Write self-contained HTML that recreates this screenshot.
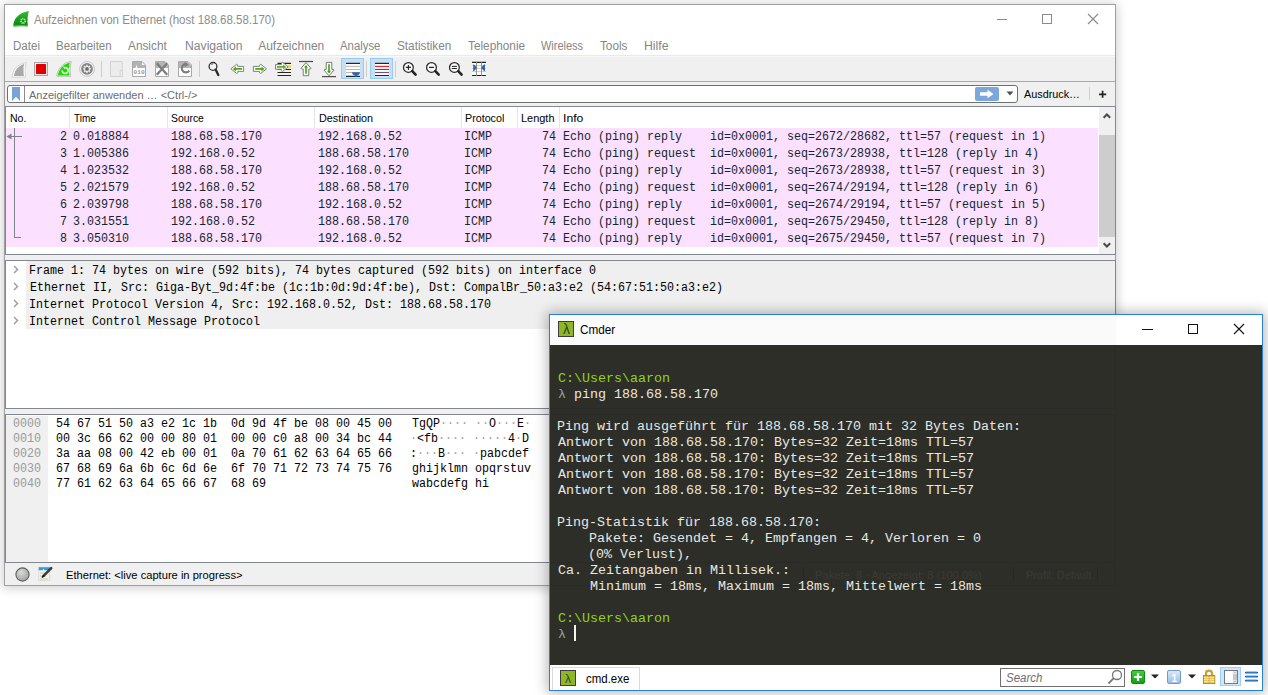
<!DOCTYPE html><html><head><meta charset="utf-8"><style>
html,body{margin:0;padding:0;}
body{width:1268px;height:695px;overflow:hidden;position:relative;background:#fff;}
.t{position:absolute;white-space:pre;line-height:1;transform-origin:0 0;}
.b{position:absolute;box-sizing:border-box;}
svg{position:absolute;overflow:visible;}
</style></head><body>
<div class="b" style="left:4px;top:4px;width:1112px;height:582px;box-shadow:0 1px 10px 1px rgba(0,0,0,0.20);background:#f0f0f0;border:1px solid #a0a0a0;"></div>
<div class="b" style="left:5px;top:5px;width:1110px;height:50px;background:#fff;"></div>
<svg style="left:12px;top:10px;" width="18" height="18" viewBox="0 0 18 18"><defs><linearGradient id="lg" x1="0" y1="0" x2="0" y2="1"><stop offset="0" stop-color="#30c030"/><stop offset="0.85" stop-color="#0f8a0f"/><stop offset="1" stop-color="#5cb85c"/></linearGradient></defs><path d="M1.2 16.7C1.3 9.5 5.5 3 16.9 1C15.6 5.5 15.1 10.5 15.9 16.6C11 16 6 16 1.2 16.7Z" fill="url(#lg)"/><circle cx="11" cy="11" r="2.1" fill="none" stroke="#e8f8e8" stroke-width="1.4" stroke-dasharray="1 0.65"/><path d="M2.5 16.2C6 15.6 11 15.6 15.5 16.2" stroke="#6fcf6f" stroke-width="0.8" fill="none"/></svg>
<div class="t" style="left:34.30px;top:14.00px;font-size:12px;color:#8c8c8c;font-family:'Liberation Sans', sans-serif;transform:scaleX(0.9582);">Aufzeichnen von Ethernet (host 188.68.58.170)</div>
<div class="b" style="left:997px;top:19px;width:10px;height:1px;background:#8a8a8a;"></div>
<div class="b" style="left:1042px;top:14px;width:10px;height:10px;border:1px solid #8a8a8a;"></div>
<svg style="left:1087px;top:13px;" width="12" height="12" viewBox="0 0 12 12"><path d="M1 1L11 11M11 1L1 11" stroke="#8a8a8a" stroke-width="1.1"/></svg>
<div class="t" style="left:13.40px;top:40.00px;font-size:12px;color:#858585;font-family:'Liberation Sans', sans-serif;transform:scaleX(0.9617);">Datei</div>
<div class="t" style="left:56.30px;top:40.00px;font-size:12px;color:#858585;font-family:'Liberation Sans', sans-serif;transform:scaleX(0.9587);">Bearbeiten</div>
<div class="t" style="left:128.20px;top:40.00px;font-size:12px;color:#858585;font-family:'Liberation Sans', sans-serif;transform:scaleX(0.9846);">Ansicht</div>
<div class="t" style="left:184.50px;top:40.00px;font-size:12px;color:#858585;font-family:'Liberation Sans', sans-serif;transform:scaleX(1.0138);">Navigation</div>
<div class="t" style="left:258.20px;top:40.00px;font-size:12px;color:#858585;font-family:'Liberation Sans', sans-serif;">Aufzeichnen</div>
<div class="t" style="left:340.20px;top:40.00px;font-size:12px;color:#858585;font-family:'Liberation Sans', sans-serif;transform:scaleX(0.9461);">Analyse</div>
<div class="t" style="left:397.00px;top:40.00px;font-size:12px;color:#858585;font-family:'Liberation Sans', sans-serif;transform:scaleX(0.9801);">Statistiken</div>
<div class="t" style="left:467.50px;top:40.00px;font-size:12px;color:#858585;font-family:'Liberation Sans', sans-serif;transform:scaleX(0.9833);">Telephonie</div>
<div class="t" style="left:541.30px;top:40.00px;font-size:12px;color:#858585;font-family:'Liberation Sans', sans-serif;transform:scaleX(0.9152);">Wireless</div>
<div class="t" style="left:600.20px;top:40.00px;font-size:12px;color:#858585;font-family:'Liberation Sans', sans-serif;transform:scaleX(0.9781);">Tools</div>
<div class="t" style="left:644.20px;top:40.00px;font-size:12px;color:#858585;font-family:'Liberation Sans', sans-serif;transform:scaleX(1.0233);">Hilfe</div>
<div class="b" style="left:5px;top:55px;width:1110px;height:26px;background:#f0f0f0;border-top:1px solid #e9e9e9;"></div>
<div class="b" style="left:5px;top:56px;width:1110px;height:1px;background:#f8f8f8;"></div>
<div class="b" style="left:5px;top:81px;width:1110px;height:1px;background:#a8a8a8;"></div>
<svg style="left:0;top:0" width="1268" height="695" viewBox="0 0 1268 695"><path d="M11.9 77.2C12.5 70.5 17 63.8 26.2 62.6C25 67 24.8 72 25.7 77.2Z" fill="#f8f8f8" stroke="#d2d2d2" stroke-width="0.9"/><path d="M13.9 76C14.8 70.5 18 66 24.2 64.1C23.3 68 23.2 72 24 76Z" fill="#a9a9a9"/><path d="M24 66.5C24.8 69 24.8 72 24 74" stroke="#f4f4f4" stroke-width="1" fill="none"/><rect x="34.5" y="62.5" width="13" height="13" fill="#fde8e8" stroke="#a8a8a8" stroke-width="1"/><rect x="36" y="64" width="10" height="10" fill="#dc0000" rx="0.5"/><path d="M56.8 76.3C57.5 69.5 62 62.8 71.3 61.5C70 66 69.8 71 70.7 76.3Z" fill="#f4f4f4" stroke="#b8b8b8" stroke-width="0.9"/><path d="M57.8 75.6C58.8 69.5 62.5 64.5 69.8 62.4C68.8 66.5 68.6 71 69.4 75.6Z" fill="#1edc00"/><path d="M62.2 70.5A2.9 2.9 0 1 0 65.4 67.6" stroke="#fff" stroke-width="1.5" fill="none"/><path d="M63.2 66.2L66 67.4L64.2 69.3Z" fill="#fff"/><circle cx="87" cy="68.9" r="7.4" fill="#f6f6f6" stroke="#c4c4c4" stroke-width="1"/><circle cx="87" cy="68.9" r="5.9" fill="#858585"/><path d="M86.28 66.09L86.31 64.86L87.69 64.86L87.72 66.09L88.11 66.22L88.48 66.41L89.37 65.55L90.35 66.53L89.49 67.42L89.68 67.79L89.81 68.18L91.04 68.21L91.04 69.59L89.81 69.62L89.68 70.01L89.49 70.38L90.35 71.27L89.37 72.25L88.48 71.39L88.11 71.58L87.72 71.71L87.69 72.94L86.31 72.94L86.28 71.71L85.89 71.58L85.52 71.39L84.63 72.25L83.65 71.27L84.51 70.38L84.32 70.01L84.19 69.62L82.96 69.59L82.96 68.21L84.19 68.18L84.32 67.79L84.51 67.42L83.65 66.53L84.63 65.55L85.52 66.41L85.89 66.22Z" fill="#f2f2f2"/><circle cx="87" cy="68.9" r="1.9" fill="#6a6a6a"/><path d="M101.5 61V77" stroke="#cdcdcd" stroke-width="1"/><path d="M199.5 61V77" stroke="#cdcdcd" stroke-width="1"/><path d="M366.5 61V77" stroke="#cdcdcd" stroke-width="1"/><path d="M395.5 61V77" stroke="#cdcdcd" stroke-width="1"/><path d="M110.5 61.5H122.2V76.5H110.5Z" fill="#ececec" stroke="#d2d2d2"/><path d="M120.2 70.5H122.5V76.5H120.2Z" fill="#f2f2f2" stroke="#d2d2d2"/><path d="M132.5 61.5H142L145.5 65V76.5H132.5Z" fill="#fff" stroke="#a9a9a9"/><path d="M133 62H141.8L145 65.2V68H137.5L136.5 64.5L135.5 68H133Z" fill="#b2b2b2"/><path d="M142 62.5V65H144.5" fill="#fff"/><text x="133.6" y="74.4" font-family="Liberation Mono" font-size="5.6" font-weight="bold" fill="#9a9a9a" style="-webkit-font-smoothing:antialiased" textLength="11" lengthAdjust="spacingAndGlyphs">010</text><path d="M155.5 61.5H165L168.5 65V76.5H155.5Z" fill="#fff" stroke="#a9a9a9"/><path d="M156 62H164.8L168 65.2V68H156Z" fill="#b4b4b4"/><path d="M156.8 63.2L167.2 74.8M167.2 63.2L156.8 74.8" stroke="#7e7e7e" stroke-width="2.4"/><path d="M178.5 61.5H188L191.5 65V76.5H178.5Z" fill="#fff" stroke="#a9a9a9"/><path d="M179 62H187.8L191 65.2V68H179Z" fill="#b4b4b4"/><path d="M189.3 70.6A4.1 4.1 0 1 1 186 64.2" stroke="#7e7e7e" stroke-width="2.2" fill="none"/><path d="M184.4 61.8L188.8 64.4L184.8 67.2Z" fill="#7e7e7e"/><circle cx="213" cy="66.4" r="3.9" fill="#f4f4f2" stroke="#333" stroke-width="1.3"/><path d="M215.6 69.6L218.3 75" stroke="#2a2a2a" stroke-width="2.3" stroke-linecap="round"/><path d="M211.2 64.7A2 2 0 0 1 213 64" stroke="#555" stroke-width="0.8" fill="none"/><path d="M230.8 68.8L236.6 64.3L237.8 65V66.4H243.6V71.4H237.8V72.8L236.6 73.4Z" fill="#fff" stroke="#808080" stroke-width="1" stroke-linejoin="round"/><path d="M232.8 68.9L236 66.4V68H242V69.8H236V71.4Z" fill="#4aac00"/><path d="M266.6 68.8L260.8 64.3L259.6 65V66.4H253.4V71.4H259.6V72.8L260.8 73.4Z" fill="#fff" stroke="#808080" stroke-width="1" stroke-linejoin="round"/><path d="M264.6 68.9L261.4 66.4V68H255.2V69.8H261.4V71.4Z" fill="#4aac00"/><path d="M277.5 63.4H291M277.5 69.5H291M277.5 72.5H291M277.5 75.5H291" stroke="#262626" stroke-width="1.1"/><rect x="287.8" y="65" width="3.4" height="3.3" fill="#ffe033"/><path d="M288.2 66.9L282.6 62.3L281.5 63V64.6H275.5V69.2H281.5V70.8L282.6 71.5Z" fill="#fff" stroke="#808080" stroke-width="1" stroke-linejoin="round"/><path d="M286.2 66.9L283 64.4V66H277V67.8H283V69.4Z" fill="#5ab41a"/><path d="M299 61.5H313" stroke="#4a4a4a" stroke-width="1.2"/><path d="M306 62.6L311 68.3L310.4 69H308.8V75.7H303.2V69H301.6L301 68.3Z" fill="#fff" stroke="#7a7a7a" stroke-width="1" stroke-linejoin="round"/><path d="M306 65L308 67.6H306.8V73.8H305.2V67.6H304Z" fill="#38a800"/><path d="M322 76.6H336" stroke="#4a4a4a" stroke-width="1.2"/><path d="M329 75.8L334 70.1L333.4 69.4H331.8V62.4H326.2V69.4H324.6L324 70.1Z" fill="#fff" stroke="#7a7a7a" stroke-width="1" stroke-linejoin="round"/><path d="M329 73.4L331 70.8H329.8V64.2H328.2V70.8H327Z" fill="#38a800"/><rect x="341.5" y="58.5" width="22" height="20" fill="#c5dff4" stroke="#98cbf3" stroke-width="1"/><rect x="346" y="62.8" width="14" height="14.2" fill="#fbfbf8"/><path d="M346 63.4H360M346 76.4H360" stroke="#262626" stroke-width="1.1"/><path d="M346 66.4H360M346 69.5H360M346 72.5H360" stroke="#b8b8ae" stroke-width="1"/><path d="M352 72.2H360C360 74 358.5 75 357.2 75.4L356.6 77H355.6L355 75.4C353.6 75 352 74 352 72.2Z" fill="#2f62aa"/><rect x="370.5" y="58.5" width="22" height="20" fill="#c5dff4" stroke="#98cbf3" stroke-width="1"/><rect x="375" y="62.8" width="14" height="13.4" fill="#fbfbf8"/><path d="M375 63.4H389M375 75.5H389" stroke="#262626" stroke-width="1.1"/><path d="M375 66.4H389" stroke="#f01a1a" stroke-width="1.1"/><path d="M375 69.5H389" stroke="#2a58a8" stroke-width="1.1"/><path d="M375 72.5H389" stroke="#74508a" stroke-width="1.1"/><circle cx="408.4" cy="67.4" r="4.9" fill="#f8f8f6" stroke="#2a2a2a" stroke-width="1.25"/><path d="M412.29999999999995 71.2L415.59999999999997 74.6" stroke="#222" stroke-width="2.6" stroke-linecap="round"/><path d="M405.9 67.4H410.9M408.4 64.9V69.9" stroke="#222" stroke-width="1.1"/><circle cx="431.5" cy="67.4" r="4.9" fill="#f8f8f6" stroke="#2a2a2a" stroke-width="1.25"/><path d="M435.4 71.2L438.7 74.6" stroke="#222" stroke-width="2.6" stroke-linecap="round"/><path d="M429.0 67.4H434.0" stroke="#222" stroke-width="1.2"/><circle cx="454.4" cy="67.4" r="4.9" fill="#f8f8f6" stroke="#2a2a2a" stroke-width="1.25"/><path d="M458.29999999999995 71.2L461.59999999999997 74.6" stroke="#222" stroke-width="2.6" stroke-linecap="round"/><path d="M451.9 66.4H456.9M451.9 68.5H456.9" stroke="#222" stroke-width="1"/><rect x="472" y="62.4" width="14" height="13" fill="#fbfbf8"/><path d="M472 65.5H486M472 68.5H486M472 71.5H486" stroke="#c8c8bc" stroke-width="0.9"/><path d="M472 62.4H486M472 75.5H486" stroke="#222" stroke-width="1.1"/><path d="M476.5 62V76M481.5 62V76" stroke="#8a8a80" stroke-width="0.9"/><path d="M473.2 64.2C474.6 64.2 476 66.5 476.8 67.8C476 69.1 474.6 71.2 473.2 71.2Z" fill="#2f62b0"/><path d="M485 64.2C483.6 64.2 482.2 66.5 481.4 67.8C482.2 69.1 483.6 71.2 485 71.2Z" fill="#2f62b0"/></svg>
<div class="b" style="left:7px;top:85px;width:1011px;height:18px;background:#fff;border:1px solid #707070;border-radius:3px;"></div>
<div class="b" style="left:12px;top:87px;width:8px;height:14px;background:#7ba2d6;clip-path:polygon(0 0,100% 0,100% 100%,50% 70%,0 100%);"></div>
<div class="b" style="left:24px;top:86px;width:1px;height:16px;background:#8a8a8a;"></div>
<div class="t" style="left:28.60px;top:90.00px;font-size:11.5px;color:#6d6d6d;font-family:'Liberation Sans', sans-serif;transform:scaleX(0.9581);">Anzeigefilter anwenden … &lt;Ctrl-/&gt;</div>
<div class="b" style="left:975px;top:87px;width:24px;height:14px;background:#7ba7da;border-radius:2px;"></div>
<svg style="left:979px;top:89px;" width="16" height="10" viewBox="0 0 16 10"><path d="M1 3.2H8.5V0.8L14.5 5L8.5 9.2V6.8H1Z" fill="#fff"/></svg>
<svg style="left:1006px;top:91px;" width="8" height="5" viewBox="0 0 8 5"><path d="M0.5 0.5H7.5L4 4.5Z" fill="#505050"/></svg>
<div class="t" style="left:1024.10px;top:89.00px;font-size:11.5px;color:#000;font-family:'Liberation Sans', sans-serif;transform:scaleX(0.9407);">Ausdruck…</div>
<div class="b" style="left:1089px;top:87px;width:1px;height:13px;background:#d0d0d0;"></div>
<svg style="left:1098px;top:90px;" width="10" height="9" viewBox="0 0 10 9"><path d="M4.6 0.8V7.8M1 4.3H8.2" stroke="#222" stroke-width="1.7"/></svg>
<div class="b" style="left:5px;top:106px;width:1111px;height:149px;background:#fff;border:1px solid #828790;"></div>
<div class="t" style="left:9.50px;top:113.00px;font-size:11.5px;color:#000;font-family:'Liberation Sans', sans-serif;transform:scaleX(0.9152);">No.</div>
<div class="t" style="left:73.70px;top:113.00px;font-size:11.5px;color:#000;font-family:'Liberation Sans', sans-serif;transform:scaleX(0.8653);">Time</div>
<div class="t" style="left:171.40px;top:113.00px;font-size:11.5px;color:#000;font-family:'Liberation Sans', sans-serif;transform:scaleX(0.9017);">Source</div>
<div class="t" style="left:318.50px;top:113.00px;font-size:11.5px;color:#000;font-family:'Liberation Sans', sans-serif;transform:scaleX(0.9398);">Destination</div>
<div class="t" style="left:465.10px;top:113.00px;font-size:11.5px;color:#000;font-family:'Liberation Sans', sans-serif;transform:scaleX(0.9320);">Protocol</div>
<div class="t" style="left:521.20px;top:113.00px;font-size:11.5px;color:#000;font-family:'Liberation Sans', sans-serif;transform:scaleX(0.9517);">Length</div>
<div class="t" style="left:562.74px;top:113.00px;font-size:11.5px;color:#000;font-family:'Liberation Sans', sans-serif;transform:scaleX(1.0626);">Info</div>
<div class="b" style="left:69px;top:107px;width:1px;height:21px;background:#e5e5e5;"></div>
<div class="b" style="left:167px;top:107px;width:1px;height:21px;background:#e5e5e5;"></div>
<div class="b" style="left:314px;top:107px;width:1px;height:21px;background:#e5e5e5;"></div>
<div class="b" style="left:461px;top:107px;width:1px;height:21px;background:#e5e5e5;"></div>
<div class="b" style="left:517px;top:107px;width:1px;height:21px;background:#e5e5e5;"></div>
<div class="b" style="left:559px;top:107px;width:1px;height:21px;background:#e5e5e5;"></div>
<div class="b" style="left:6px;top:128px;width:1092px;height:119px;background:#fce0ff;"></div>
<div class="t" style="left:59.50px;top:131.00px;font-size:12px;color:#12272e;font-family:'Liberation Mono', monospace;transform:scaleX(0.9721);">2</div>
<div class="t" style="left:73.00px;top:131.00px;font-size:12px;color:#12272e;font-family:'Liberation Mono', monospace;transform:scaleX(0.9721);">0.018884</div>
<div class="t" style="left:171.00px;top:131.00px;font-size:12px;color:#12272e;font-family:'Liberation Mono', monospace;transform:scaleX(0.9721);">188.68.58.170</div>
<div class="t" style="left:318.00px;top:131.00px;font-size:12px;color:#12272e;font-family:'Liberation Mono', monospace;transform:scaleX(0.9721);">192.168.0.52</div>
<div class="t" style="left:464.03px;top:131.00px;font-size:12px;color:#12272e;font-family:'Liberation Mono', monospace;transform:scaleX(0.9721);">ICMP</div>
<div class="t" style="left:542.00px;top:131.00px;font-size:12px;color:#12272e;font-family:'Liberation Mono', monospace;transform:scaleX(0.9721);">74</div>
<div class="t" style="left:563.00px;top:131.00px;font-size:12px;color:#12272e;font-family:'Liberation Mono', monospace;transform:scaleX(0.9721);">Echo (ping) reply    id=0x0001, seq=2672/28682, ttl=57 (request in 1)</div>
<div class="t" style="left:59.50px;top:148.00px;font-size:12px;color:#12272e;font-family:'Liberation Mono', monospace;transform:scaleX(0.9721);">3</div>
<div class="t" style="left:73.00px;top:148.00px;font-size:12px;color:#12272e;font-family:'Liberation Mono', monospace;transform:scaleX(0.9721);">1.005386</div>
<div class="t" style="left:171.00px;top:148.00px;font-size:12px;color:#12272e;font-family:'Liberation Mono', monospace;transform:scaleX(0.9721);">192.168.0.52</div>
<div class="t" style="left:318.00px;top:148.00px;font-size:12px;color:#12272e;font-family:'Liberation Mono', monospace;transform:scaleX(0.9721);">188.68.58.170</div>
<div class="t" style="left:464.03px;top:148.00px;font-size:12px;color:#12272e;font-family:'Liberation Mono', monospace;transform:scaleX(0.9721);">ICMP</div>
<div class="t" style="left:542.00px;top:148.00px;font-size:12px;color:#12272e;font-family:'Liberation Mono', monospace;transform:scaleX(0.9721);">74</div>
<div class="t" style="left:563.00px;top:148.00px;font-size:12px;color:#12272e;font-family:'Liberation Mono', monospace;transform:scaleX(0.9721);">Echo (ping) request  id=0x0001, seq=2673/28938, ttl=128 (reply in 4)</div>
<div class="t" style="left:59.50px;top:165.00px;font-size:12px;color:#12272e;font-family:'Liberation Mono', monospace;transform:scaleX(0.9721);">4</div>
<div class="t" style="left:73.00px;top:165.00px;font-size:12px;color:#12272e;font-family:'Liberation Mono', monospace;transform:scaleX(0.9721);">1.023532</div>
<div class="t" style="left:171.00px;top:165.00px;font-size:12px;color:#12272e;font-family:'Liberation Mono', monospace;transform:scaleX(0.9721);">188.68.58.170</div>
<div class="t" style="left:318.00px;top:165.00px;font-size:12px;color:#12272e;font-family:'Liberation Mono', monospace;transform:scaleX(0.9721);">192.168.0.52</div>
<div class="t" style="left:464.03px;top:165.00px;font-size:12px;color:#12272e;font-family:'Liberation Mono', monospace;transform:scaleX(0.9721);">ICMP</div>
<div class="t" style="left:542.00px;top:165.00px;font-size:12px;color:#12272e;font-family:'Liberation Mono', monospace;transform:scaleX(0.9721);">74</div>
<div class="t" style="left:563.00px;top:165.00px;font-size:12px;color:#12272e;font-family:'Liberation Mono', monospace;transform:scaleX(0.9721);">Echo (ping) reply    id=0x0001, seq=2673/28938, ttl=57 (request in 3)</div>
<div class="t" style="left:59.50px;top:182.00px;font-size:12px;color:#12272e;font-family:'Liberation Mono', monospace;transform:scaleX(0.9721);">5</div>
<div class="t" style="left:73.00px;top:182.00px;font-size:12px;color:#12272e;font-family:'Liberation Mono', monospace;transform:scaleX(0.9721);">2.021579</div>
<div class="t" style="left:171.00px;top:182.00px;font-size:12px;color:#12272e;font-family:'Liberation Mono', monospace;transform:scaleX(0.9721);">192.168.0.52</div>
<div class="t" style="left:318.00px;top:182.00px;font-size:12px;color:#12272e;font-family:'Liberation Mono', monospace;transform:scaleX(0.9721);">188.68.58.170</div>
<div class="t" style="left:464.03px;top:182.00px;font-size:12px;color:#12272e;font-family:'Liberation Mono', monospace;transform:scaleX(0.9721);">ICMP</div>
<div class="t" style="left:542.00px;top:182.00px;font-size:12px;color:#12272e;font-family:'Liberation Mono', monospace;transform:scaleX(0.9721);">74</div>
<div class="t" style="left:563.00px;top:182.00px;font-size:12px;color:#12272e;font-family:'Liberation Mono', monospace;transform:scaleX(0.9721);">Echo (ping) request  id=0x0001, seq=2674/29194, ttl=128 (reply in 6)</div>
<div class="t" style="left:59.50px;top:199.00px;font-size:12px;color:#12272e;font-family:'Liberation Mono', monospace;transform:scaleX(0.9721);">6</div>
<div class="t" style="left:73.00px;top:199.00px;font-size:12px;color:#12272e;font-family:'Liberation Mono', monospace;transform:scaleX(0.9721);">2.039798</div>
<div class="t" style="left:171.00px;top:199.00px;font-size:12px;color:#12272e;font-family:'Liberation Mono', monospace;transform:scaleX(0.9721);">188.68.58.170</div>
<div class="t" style="left:318.00px;top:199.00px;font-size:12px;color:#12272e;font-family:'Liberation Mono', monospace;transform:scaleX(0.9721);">192.168.0.52</div>
<div class="t" style="left:464.03px;top:199.00px;font-size:12px;color:#12272e;font-family:'Liberation Mono', monospace;transform:scaleX(0.9721);">ICMP</div>
<div class="t" style="left:542.00px;top:199.00px;font-size:12px;color:#12272e;font-family:'Liberation Mono', monospace;transform:scaleX(0.9721);">74</div>
<div class="t" style="left:563.00px;top:199.00px;font-size:12px;color:#12272e;font-family:'Liberation Mono', monospace;transform:scaleX(0.9721);">Echo (ping) reply    id=0x0001, seq=2674/29194, ttl=57 (request in 5)</div>
<div class="t" style="left:59.50px;top:216.00px;font-size:12px;color:#12272e;font-family:'Liberation Mono', monospace;transform:scaleX(0.9721);">7</div>
<div class="t" style="left:73.00px;top:216.00px;font-size:12px;color:#12272e;font-family:'Liberation Mono', monospace;transform:scaleX(0.9721);">3.031551</div>
<div class="t" style="left:171.00px;top:216.00px;font-size:12px;color:#12272e;font-family:'Liberation Mono', monospace;transform:scaleX(0.9721);">192.168.0.52</div>
<div class="t" style="left:318.00px;top:216.00px;font-size:12px;color:#12272e;font-family:'Liberation Mono', monospace;transform:scaleX(0.9721);">188.68.58.170</div>
<div class="t" style="left:464.03px;top:216.00px;font-size:12px;color:#12272e;font-family:'Liberation Mono', monospace;transform:scaleX(0.9721);">ICMP</div>
<div class="t" style="left:542.00px;top:216.00px;font-size:12px;color:#12272e;font-family:'Liberation Mono', monospace;transform:scaleX(0.9721);">74</div>
<div class="t" style="left:563.00px;top:216.00px;font-size:12px;color:#12272e;font-family:'Liberation Mono', monospace;transform:scaleX(0.9721);">Echo (ping) request  id=0x0001, seq=2675/29450, ttl=128 (reply in 8)</div>
<div class="t" style="left:59.50px;top:233.00px;font-size:12px;color:#12272e;font-family:'Liberation Mono', monospace;transform:scaleX(0.9721);">8</div>
<div class="t" style="left:73.00px;top:233.00px;font-size:12px;color:#12272e;font-family:'Liberation Mono', monospace;transform:scaleX(0.9721);">3.050310</div>
<div class="t" style="left:171.00px;top:233.00px;font-size:12px;color:#12272e;font-family:'Liberation Mono', monospace;transform:scaleX(0.9721);">188.68.58.170</div>
<div class="t" style="left:318.00px;top:233.00px;font-size:12px;color:#12272e;font-family:'Liberation Mono', monospace;transform:scaleX(0.9721);">192.168.0.52</div>
<div class="t" style="left:464.03px;top:233.00px;font-size:12px;color:#12272e;font-family:'Liberation Mono', monospace;transform:scaleX(0.9721);">ICMP</div>
<div class="t" style="left:542.00px;top:233.00px;font-size:12px;color:#12272e;font-family:'Liberation Mono', monospace;transform:scaleX(0.9721);">74</div>
<div class="t" style="left:563.00px;top:233.00px;font-size:12px;color:#12272e;font-family:'Liberation Mono', monospace;transform:scaleX(0.9721);">Echo (ping) reply    id=0x0001, seq=2675/29450, ttl=57 (request in 7)</div>
<div class="b" style="left:14px;top:128px;width:1px;height:110px;background:#7d8488;"></div>
<div class="b" style="left:14px;top:237px;width:7px;height:1px;background:#7d8488;"></div>
<div class="b" style="left:10px;top:136px;width:12px;height:1px;background:#7d8488;"></div>
<svg style="left:6px;top:133px;" width="6" height="7" viewBox="0 0 6 7"><path d="M0.5 3.5L5.5 0.5V6.5Z" fill="#7d8488"/></svg>
<div class="b" style="left:1099px;top:107px;width:16px;height:147px;background:#f0f0f0;"></div>
<div class="b" style="left:1099px;top:135px;width:16px;height:102px;background:#cdcdcd;"></div>
<svg style="left:1101px;top:112px;" width="11" height="8" viewBox="0 0 11 8"><path d="M2.6 5.8L5.9 2.5L9.2 5.8" fill="none" stroke="#4a4a4a" stroke-width="2"/></svg>
<svg style="left:1101px;top:241px;" width="11" height="8" viewBox="0 0 11 8"><path d="M2.6 2.2L5.9 5.5L9.2 2.2" fill="none" stroke="#4a4a4a" stroke-width="2"/></svg>
<div class="b" style="left:5px;top:260px;width:1111px;height:149px;background:#fff;border:1px solid #828790;"></div>
<div class="b" style="left:26px;top:261px;width:1089px;height:68px;background:#efefef;"></div>
<div class="t" style="left:28.73px;top:265.00px;font-size:12px;color:#000;font-family:'Liberation Mono', monospace;transform:scaleX(0.9721);">Frame 1: 74 bytes on wire (592 bits), 74 bytes captured (592 bits) on interface 0</div>
<svg style="left:13px;top:265px;" width="6" height="9" viewBox="0 0 6 9"><path d="M1 1L4.5 4.5L1 8" fill="none" stroke="#9a9a9a" stroke-width="1.4"/></svg>
<div class="t" style="left:29.70px;top:282.00px;font-size:12px;color:#000;font-family:'Liberation Mono', monospace;transform:scaleX(0.9721);">Ethernet II, Src: Giga-Byt_9d:4f:be (1c:1b:0d:9d:4f:be), Dst: CompalBr_50:a3:e2 (54:67:51:50:a3:e2)</div>
<svg style="left:13px;top:282px;" width="6" height="9" viewBox="0 0 6 9"><path d="M1 1L4.5 4.5L1 8" fill="none" stroke="#9a9a9a" stroke-width="1.4"/></svg>
<div class="t" style="left:28.73px;top:299.00px;font-size:12px;color:#000;font-family:'Liberation Mono', monospace;transform:scaleX(0.9721);">Internet Protocol Version 4, Src: 192.168.0.52, Dst: 188.68.58.170</div>
<svg style="left:13px;top:299px;" width="6" height="9" viewBox="0 0 6 9"><path d="M1 1L4.5 4.5L1 8" fill="none" stroke="#9a9a9a" stroke-width="1.4"/></svg>
<div class="t" style="left:28.73px;top:316.00px;font-size:12px;color:#000;font-family:'Liberation Mono', monospace;transform:scaleX(0.9721);">Internet Control Message Protocol</div>
<svg style="left:13px;top:316px;" width="6" height="9" viewBox="0 0 6 9"><path d="M1 1L4.5 4.5L1 8" fill="none" stroke="#9a9a9a" stroke-width="1.4"/></svg>
<div class="b" style="left:5px;top:414px;width:1111px;height:149px;background:#fff;border:1px solid #828790;"></div>
<div class="b" style="left:6px;top:415px;width:42px;height:147px;background:#f0f0f0;border-top:1px solid #fafafa;"></div>
<div class="t" style="left:13.00px;top:418.00px;font-size:12px;color:#9a9a9a;font-family:'Liberation Mono', monospace;transform:scaleX(0.9721);">0000</div>
<div class="t" style="left:55.50px;top:418.00px;font-size:12px;color:#000;font-family:'Liberation Mono', monospace;transform:scaleX(0.9721);">54 67 51 50 a3 e2 1c 1b  0d 9d 4f be 08 00 45 00</div>
<div class="t" style="left:412.40px;top:418.00px;font-size:12px;color:#000;font-family:'Liberation Mono', monospace;transform:scaleX(0.9721);">TgQP<span style="color:#a0a0a0">·</span><span style="color:#a0a0a0">·</span><span style="color:#a0a0a0">·</span><span style="color:#a0a0a0">·</span> <span style="color:#a0a0a0">·</span><span style="color:#a0a0a0">·</span>O<span style="color:#a0a0a0">·</span><span style="color:#a0a0a0">·</span><span style="color:#a0a0a0">·</span>E<span style="color:#a0a0a0">·</span></div>
<div class="t" style="left:13.00px;top:433.00px;font-size:12px;color:#9a9a9a;font-family:'Liberation Mono', monospace;transform:scaleX(0.9721);">0010</div>
<div class="t" style="left:55.50px;top:433.00px;font-size:12px;color:#000;font-family:'Liberation Mono', monospace;transform:scaleX(0.9721);">00 3c 66 62 00 00 80 01  00 00 c0 a8 00 34 bc 44</div>
<div class="t" style="left:410.46px;top:433.00px;font-size:12px;color:#000;font-family:'Liberation Mono', monospace;transform:scaleX(0.9721);"><span style="color:#a0a0a0">·</span>&lt;fb<span style="color:#a0a0a0">·</span><span style="color:#a0a0a0">·</span><span style="color:#a0a0a0">·</span><span style="color:#a0a0a0">·</span> <span style="color:#a0a0a0">·</span><span style="color:#a0a0a0">·</span><span style="color:#a0a0a0">·</span><span style="color:#a0a0a0">·</span><span style="color:#a0a0a0">·</span>4<span style="color:#a0a0a0">·</span>D</div>
<div class="t" style="left:13.00px;top:448.00px;font-size:12px;color:#9a9a9a;font-family:'Liberation Mono', monospace;transform:scaleX(0.9721);">0020</div>
<div class="t" style="left:55.50px;top:448.00px;font-size:12px;color:#000;font-family:'Liberation Mono', monospace;transform:scaleX(0.9721);">3a aa 08 00 42 eb 00 01  0a 70 61 62 63 64 65 66</div>
<div class="t" style="left:410.46px;top:448.00px;font-size:12px;color:#000;font-family:'Liberation Mono', monospace;transform:scaleX(0.9721);">:<span style="color:#a0a0a0">·</span><span style="color:#a0a0a0">·</span><span style="color:#a0a0a0">·</span>B<span style="color:#a0a0a0">·</span><span style="color:#a0a0a0">·</span><span style="color:#a0a0a0">·</span> <span style="color:#a0a0a0">·</span>pabcdef</div>
<div class="t" style="left:13.00px;top:463.00px;font-size:12px;color:#9a9a9a;font-family:'Liberation Mono', monospace;transform:scaleX(0.9721);">0030</div>
<div class="t" style="left:55.50px;top:463.00px;font-size:12px;color:#000;font-family:'Liberation Mono', monospace;transform:scaleX(0.9721);">67 68 69 6a 6b 6c 6d 6e  6f 70 71 72 73 74 75 76</div>
<div class="t" style="left:412.40px;top:463.00px;font-size:12px;color:#000;font-family:'Liberation Mono', monospace;transform:scaleX(0.9721);">ghijklmn opqrstuv</div>
<div class="t" style="left:13.00px;top:478.00px;font-size:12px;color:#9a9a9a;font-family:'Liberation Mono', monospace;transform:scaleX(0.9721);">0040</div>
<div class="t" style="left:55.50px;top:478.00px;font-size:12px;color:#000;font-family:'Liberation Mono', monospace;transform:scaleX(0.9721);">77 61 62 63 64 65 66 67  68 69</div>
<div class="t" style="left:412.40px;top:478.00px;font-size:12px;color:#000;font-family:'Liberation Mono', monospace;transform:scaleX(0.9721);">wabcdefg hi</div>
<svg style="left:14.6px;top:567px;" width="15" height="15" viewBox="0 0 15 15"><defs><radialGradient id="sg" cx="0.4" cy="0.35" r="0.7"><stop offset="0" stop-color="#d8dad8"/><stop offset="1" stop-color="#9ea19e"/></radialGradient></defs><circle cx="7.5" cy="7.5" r="6.6" fill="url(#sg)" stroke="#5f625f" stroke-width="1.1"/></svg>
<svg style="left:38px;top:566px;" width="15" height="16" viewBox="0 0 15 16"><rect x="0.8" y="1.2" width="11" height="13.3" fill="#f2f2ea" stroke="#d6d6cc" stroke-width="0.8"/><path d="M0.8 1.2H11.8V4.3H6.5L5.4 2.6L4.6 4.3H0.8Z" fill="#2a9be0"/><path d="M2 7H9M2 10H8M2 13H10" stroke="#c4c4bc" stroke-width="0.8"/><path d="M13.2 2.2L5.6 9.8" stroke="#3c3c3c" stroke-width="2.6" stroke-linecap="round"/><path d="M5.6 9.8L4.4 11" stroke="#111" stroke-width="1.6" stroke-linecap="round"/></svg>
<div class="t" style="left:66.20px;top:570.00px;font-size:11.5px;color:#000;font-family:'Liberation Sans', sans-serif;transform:scaleX(0.9689);">Ethernet: &lt;live capture in progress&gt;</div>
<div class="b" style="left:549px;top:314px;width:714px;height:377px;background:#2e2e29;border:1px solid #2a80d2;box-shadow:0 0 12px 2px rgba(0,0,0,0.28);"></div>
<div class="b" style="left:550px;top:315px;width:712px;height:30px;background:#fff;"></div>
<div class="b" style="left:550px;top:315px;width:566px;height:30px;background:rgba(0,0,0,0.018);"></div>
<div class="b" style="left:558px;top:321px;width:16px;height:16px;background:#8bb823;border:1px solid #3c3c3c;"></div>
<div class="t" style="left:562.70px;top:322.00px;font-size:14px;color:#3c3c3c;font-family:'Liberation Sans', sans-serif;transform:scaleX(0.9857);">λ</div>
<div class="t" style="left:579.70px;top:324.00px;font-size:12.5px;color:#000;font-family:'Liberation Sans', sans-serif;transform:scaleX(0.9399);">Cmder</div>
<div class="b" style="left:1142px;top:329px;width:11px;height:1px;background:#111;"></div>
<div class="b" style="left:1188px;top:324px;width:10px;height:10px;border:1px solid #111;"></div>
<svg style="left:1233px;top:323px;" width="12" height="12" viewBox="0 0 12 12"><path d="M1 1L11 11M11 1L1 11" stroke="#111" stroke-width="1.1"/></svg>
<div class="b" style="left:550px;top:408px;width:566px;height:1px;background:#2a2a26;"></div>
<div class="b" style="left:550px;top:414px;width:566px;height:1px;background:#2a2a26;"></div>
<div class="b" style="left:550px;top:562px;width:566px;height:1px;background:#2a2a26;"></div>
<div class="b" style="left:550px;top:585px;width:566px;height:1px;background:#2a2a26;"></div>
<div class="b" style="left:1115px;top:345px;width:1px;height:241px;background:#2a2a26;"></div>
<div class="b" style="left:803px;top:567px;width:1px;height:14px;background:#272723;"></div>
<div class="b" style="left:1013px;top:567px;width:1px;height:14px;background:#272723;"></div>
<div class="b" style="left:1097px;top:567px;width:1px;height:14px;background:#272723;"></div>
<div class="t" style="left:814.90px;top:570.00px;font-size:11.5px;color:#3a3a34;font-family:'Liberation Sans', sans-serif;transform:scaleX(0.9695);">Pakete: 8 · Angezeigt: 8 (100.0%)</div>
<div class="t" style="left:1026.00px;top:570.00px;font-size:11.5px;color:#3a3a34;font-family:'Liberation Sans', sans-serif;transform:scaleX(0.9451);">Profil: Default</div>
<div class="t" style="left:558.30px;top:372.00px;font-size:13.66px;color:#8ed41c;font-family:'Liberation Mono', monospace;transform:scaleX(0.9762);">C:\Users\aaron</div>
<div class="t" style="left:558.30px;top:388.00px;font-size:13.66px;color:#a0a09a;font-family:'Liberation Mono', monospace;transform:scaleX(0.9762);">λ</div>
<div class="t" style="left:573.52px;top:388.00px;font-size:13.66px;color:#e8e8e2;font-family:'Liberation Mono', monospace;transform:scaleX(0.9762);">ping 188.68.58.170</div>
<div class="t" style="left:557.32px;top:420.00px;font-size:13.66px;color:#e8e8e2;font-family:'Liberation Mono', monospace;transform:scaleX(0.9762);">Ping wird ausgeführt für 188.68.58.170 mit 32 Bytes Daten:</div>
<div class="t" style="left:558.30px;top:436.00px;font-size:13.66px;color:#e8e8e2;font-family:'Liberation Mono', monospace;transform:scaleX(0.9762);">Antwort von 188.68.58.170: Bytes=32 Zeit=18ms TTL=57</div>
<div class="t" style="left:558.30px;top:452.00px;font-size:13.66px;color:#e8e8e2;font-family:'Liberation Mono', monospace;transform:scaleX(0.9762);">Antwort von 188.68.58.170: Bytes=32 Zeit=18ms TTL=57</div>
<div class="t" style="left:558.30px;top:468.00px;font-size:13.66px;color:#e8e8e2;font-family:'Liberation Mono', monospace;transform:scaleX(0.9762);">Antwort von 188.68.58.170: Bytes=32 Zeit=18ms TTL=57</div>
<div class="t" style="left:558.30px;top:484.00px;font-size:13.66px;color:#e8e8e2;font-family:'Liberation Mono', monospace;transform:scaleX(0.9762);">Antwort von 188.68.58.170: Bytes=32 Zeit=18ms TTL=57</div>
<div class="t" style="left:557.32px;top:516.00px;font-size:13.66px;color:#e8e8e2;font-family:'Liberation Mono', monospace;transform:scaleX(0.9762);">Ping-Statistik für 188.68.58.170:</div>
<div class="t" style="left:557.32px;top:532.00px;font-size:13.66px;color:#e8e8e2;font-family:'Liberation Mono', monospace;transform:scaleX(0.9762);">    Pakete: Gesendet = 4, Empfangen = 4, Verloren = 0</div>
<div class="t" style="left:556.35px;top:548.00px;font-size:13.66px;color:#e8e8e2;font-family:'Liberation Mono', monospace;transform:scaleX(0.9762);">    (0% Verlust),</div>
<div class="t" style="left:558.30px;top:564.00px;font-size:13.66px;color:#e8e8e2;font-family:'Liberation Mono', monospace;transform:scaleX(0.9762);">Ca. Zeitangaben in Millisek.:</div>
<div class="t" style="left:558.30px;top:580.00px;font-size:13.66px;color:#e8e8e2;font-family:'Liberation Mono', monospace;transform:scaleX(0.9762);">    Minimum = 18ms, Maximum = 18ms, Mittelwert = 18ms</div>
<div class="t" style="left:558.30px;top:612.00px;font-size:13.66px;color:#8ed41c;font-family:'Liberation Mono', monospace;transform:scaleX(0.9762);">C:\Users\aaron</div>
<div class="t" style="left:558.30px;top:628.00px;font-size:13.66px;color:#a0a09a;font-family:'Liberation Mono', monospace;transform:scaleX(0.9762);">λ</div>
<div class="b" style="left:574px;top:625px;width:2px;height:16px;background:#f4f4f0;"></div>
<div class="b" style="left:550px;top:665px;width:712px;height:25px;background:#fff;"></div>
<div class="b" style="left:552px;top:667px;width:88px;height:23px;border:1px solid #dadada;border-bottom:none;"></div>
<div class="b" style="left:560px;top:670px;width:16px;height:16px;background:#8bb823;border:1px solid #3c3c3c;"></div>
<div class="t" style="left:564.70px;top:672.00px;font-size:13px;color:#3c3c3c;font-family:'Liberation Sans', sans-serif;transform:scaleX(0.9286);">λ</div>
<div class="t" style="left:585.60px;top:673.00px;font-size:12.5px;color:#000;font-family:'Liberation Sans', sans-serif;transform:scaleX(0.9178);">cmd.exe</div>
<div class="b" style="left:1000px;top:668px;width:125px;height:19px;border:1px solid #707070;background:#fff;"></div>
<div class="t" style="left:1006.00px;top:672.00px;font-size:12px;color:#6d6d6d;font-family:'Liberation Sans', sans-serif;font-style:italic;transform:scaleX(0.9570);">Search</div>
<svg style="left:1107px;top:669px;" width="16" height="16" viewBox="0 0 16 16"><circle cx="10" cy="6" r="4.5" fill="none" stroke="#777" stroke-width="1.3"/><path d="M6.8 9.2L1.5 14.5" stroke="#777" stroke-width="1.8"/></svg>
<div class="b" style="left:1131px;top:670px;width:14px;height:14px;background:linear-gradient(#3fcf3f,#15a015);border:1px solid #108a10;border-radius:2px;"></div>
<svg style="left:1131px;top:670px;" width="14" height="14" viewBox="0 0 14 14"><path d="M7 3V11M3 7H11" stroke="#fff" stroke-width="2.2"/></svg>
<svg style="left:1151px;top:674px;" width="8" height="5" viewBox="0 0 8 5"><path d="M0 0.5H8L4 4.5Z" fill="#222"/></svg>
<div class="b" style="left:1167px;top:670px;width:14px;height:14px;background:linear-gradient(#d8e8f6,#9dc0e4);border:1px solid #6c9ccc;border-radius:2px;"></div>
<div class="t" style="left:1171.50px;top:674.00px;font-size:10px;color:#fff;font-family:'Liberation Sans', sans-serif;font-weight:bold;">1</div>
<svg style="left:1188px;top:674px;" width="8" height="5" viewBox="0 0 8 5"><path d="M0 0.5H8L4 4.5Z" fill="#222"/></svg>
<svg style="left:1202px;top:669px;" width="14" height="16" viewBox="0 0 14 16"><path d="M4 7.2V4.6A3 3 0 0 1 10 4.6V7.2" fill="none" stroke="#c9a030" stroke-width="2.2"/><rect x="1.4" y="6.6" width="11.4" height="8" fill="#e8c860" stroke="#a88224" stroke-width="0.9"/><path d="M2 8.6H12.3M2 10.6H12.3M2 12.6H12.3" stroke="#f8e8a0" stroke-width="0.9"/><path d="M7.1 7V14.4" stroke="#c8a040" stroke-width="0.7"/></svg>
<div class="b" style="left:1220px;top:667px;width:21px;height:19px;background:#cce8ff;border:1px solid #99d1ff;"></div>
<svg style="left:1223px;top:669px;" width="16" height="16" viewBox="0 0 16 16"><rect x="1.5" y="1.5" width="13" height="13" fill="#f4f4f4" stroke="#7a7a7a" stroke-width="1"/><rect x="2" y="2" width="7.5" height="12" fill="#fdfdfd"/><rect x="10" y="2" width="4" height="12" fill="#c6c6c6"/><rect x="10.5" y="2.5" width="3" height="2.6" fill="#fff"/><rect x="10.5" y="10.9" width="3" height="2.6" fill="#fff"/><circle cx="12" cy="3.8" r="0.6" fill="#555"/><circle cx="12" cy="12.2" r="0.6" fill="#555"/></svg>
<svg style="left:1245px;top:671px;" width="13" height="11" viewBox="0 0 13 11"><path d="M0.8 1.6H12.2M0.8 5.6H12.2M0.8 9.6H12.2" stroke="#1a5fb0" stroke-width="1.9" stroke-linecap="round"/><path d="M1.2 1H11.5M1.2 5H11.5M1.2 9H11.5" stroke="#5ab4f4" stroke-width="0.7"/></svg>
</body></html>
